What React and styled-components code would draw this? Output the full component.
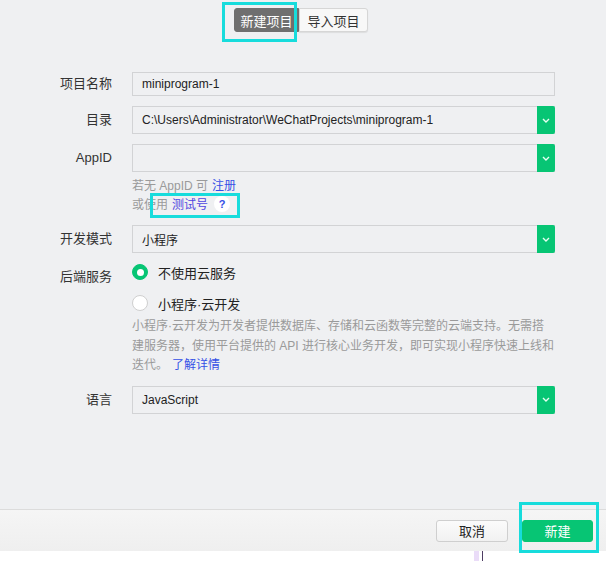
import React from "react";
import styled, { createGlobalStyle } from "styled-components";

const Global = createGlobalStyle`
  html, body { margin: 0; padding: 0; }
  body {
    width: 606px;
    height: 561px;
    overflow: hidden;
    background: #eff0f2;
    font-family: "Liberation Sans", "Noto Sans CJK SC", sans-serif;
    color: #333;
  }
`;

const Page = styled.div`
  position: relative;
  width: 606px;
  height: 561px;
  display: flex;
  flex-direction: column;
`;

const Main = styled.div`
  height: 509px;
  display: flex;
  flex-direction: column;
`;

const Tabs = styled.div`
  display: flex;
  justify-content: center;
  padding: 8px 4px 0 0;
`;

const Tab = styled.div`
  height: 24px;
  box-sizing: border-box;
  display: flex;
  align-items: center;
  justify-content: center;
  font-size: 13px;
  border-radius: ${(p) => (p.$active ? "3px 0 0 3px" : "0 3px 3px 0")};
  width: ${(p) => (p.$active ? "65px" : "69px")};
  background: ${(p) => (p.$active ? "#6f6f6f" : "#f8f8f8")};
  color: ${(p) => (p.$active ? "#fff" : "#333")};
  border: 1px solid ${(p) => (p.$active ? "#6f6f6f" : "#d6d6d6")};
  box-shadow: ${(p) => (p.$active ? "none" : "0 1px 1px rgba(0,0,0,0.08)")};
`;

const Form = styled.div`
  display: flex;
  flex-direction: column;
  padding-top: 40px;
`;

const Row = styled.div`
  display: grid;
  grid-template-columns: 112px 423px;
  column-gap: 20px;
  align-items: ${(p) => (p.$top ? "start" : "center")};
  margin-top: ${(p) => p.$mt || 0}px;
`;

const Label = styled.div`
  text-align: right;
  font-size: 13px;
  color: #333;
  line-height: 16px;
  padding-top: ${(p) => p.$pt || 0}px;
`;

const Field = styled.div`
  height: ${(p) => p.$h}px;
  box-sizing: border-box;
  border: 1px solid #d2d3d5;
  border-right: ${(p) => (p.$select ? "none" : "1px solid #d2d3d5")};
  display: flex;
  align-items: stretch;
  font-size: 12px;
  color: #222;
`;

const FieldText = styled.div`
  flex: 1;
  display: flex;
  align-items: center;
  padding-left: 9px;
  white-space: nowrap;
  overflow: hidden;
`;

const DropBtn = styled.div`
  width: 18px;
  margin: -1px 0;
  background: #07c574;
  border-radius: 0 2px 2px 0;
  display: flex;
  align-items: center;
  justify-content: center;
`;

const Chevron = () => (
  <svg width="8" height="5" viewBox="0 0 8 5">
    <path d="M1 1 L4 4 L7 1" fill="none" stroke="#e8fff2" strokeWidth="1.4" />
  </svg>
);

const Select = ({ value }) => (
  <Field $h={28} $select>
    <FieldText>{value}</FieldText>
    <DropBtn>
      <Chevron />
    </DropBtn>
  </Field>
);

const Hint = styled.div`
  grid-column: 2;
  display: flex;
  flex-direction: column;
  padding-top: 3px;
`;

const HintLine = styled.div`
  height: 19px;
  display: flex;
  align-items: center;
  font-size: 12px;
  color: #9a9a9a;
  white-space: nowrap;
`;

const Link = styled.a`
  color: ${(p) => p.$color || "#3550e6"};
  text-decoration: none;
  margin-left: 4px;
`;

const HelpDot = styled.span`
  display: inline-flex;
  align-items: center;
  justify-content: center;
  width: 16px;
  height: 16px;
  border-radius: 50%;
  background: #fff;
  color: #3550e6;
  font-size: 11px;
  font-weight: bold;
  margin-left: 6px;
`;

const RadioGroup = styled.div`
  display: flex;
  flex-direction: column;
`;

const RadioRow = styled.div`
  display: flex;
  align-items: center;
  height: 20px;
  gap: 10px;
  font-size: 13px;
  color: #222;
  margin-top: ${(p) => p.$mt || 0}px;
`;

const RadioDot = styled.span`
  width: 16px;
  height: 16px;
  box-sizing: border-box;
  border-radius: 50%;
  flex: none;
  background: ${(p) => (p.$on ? "#07c574" : "#fff")};
  border: 1px solid ${(p) => (p.$on ? "#07c574" : "#cfcfcf")};
  display: flex;
  align-items: center;
  justify-content: center;
  &::after {
    content: "";
    display: ${(p) => (p.$on ? "block" : "none")};
    width: 7px;
    height: 7px;
    border-radius: 50%;
    background: #fff;
  }
`;

const Desc = styled.div`
  font-size: 12px;
  line-height: 19.5px;
  color: #9a9a9a;
  margin-top: 4px;
  white-space: nowrap;
`;

const Footer = styled.div`
  height: 42px;
  box-sizing: border-box;
  border-top: 1px solid #dcdcdc;
  background: linear-gradient(#f5f5f5, #efefef);
  display: flex;
  align-items: center;
  justify-content: flex-end;
  gap: 14px;
  padding: 0 13px 0 0;
`;

const Button = styled.div`
  width: ${(p) => (p.$primary ? "71px" : "72px")};
  height: 22px;
  box-sizing: border-box;
  border-radius: 3px;
  display: flex;
  align-items: center;
  justify-content: center;
  font-size: 13px;
  background: ${(p) => (p.$primary ? "#07c574" : "linear-gradient(#fbfbfb, #f1f1f1)")};
  color: ${(p) => (p.$primary ? "#fff" : "#222")};
  border: 1px solid ${(p) => (p.$primary ? "#07c574" : "#cfcfcf")};
`;

const BottomStrip = styled.div`
  flex: 1;
  background: #fff;
  display: flex;
  padding-left: 474px;
  gap: 3px;
`;

const Mark = styled.span`
  width: ${(p) => p.$w}px;
  background: ${(p) => p.$c};
`;

const Highlight = styled.div`
  position: absolute;
  box-sizing: border-box;
  border: 3px solid #17dcdc;
  left: ${(p) => p.$x}px;
  top: ${(p) => p.$y}px;
  width: ${(p) => p.$w}px;
  height: ${(p) => p.$h}px;
  pointer-events: none;
`;

export default function App() {
  return (
    <>
      <Global />
      <Page>
        <Main>
          <Tabs>
            <Tab $active>新建项目</Tab>
            <Tab>导入项目</Tab>
          </Tabs>
          <Form>
            <Row>
              <Label>项目名称</Label>
              <Field $h={24}>
                <FieldText>miniprogram-1</FieldText>
              </Field>
            </Row>
            <Row $mt={10}>
              <Label>目录</Label>
              <Select value="C:\Users\Administrator\WeChatProjects\miniprogram-1" />
            </Row>
            <Row $mt={10}>
              <Label>AppID</Label>
              <Select value="" />
              <Hint>
                <HintLine>
                  若无 AppID 可<Link href="#">注册</Link>
                </HintLine>
                <HintLine>
                  或使用<Link href="#" $color="#4f46e0">测试号</Link>
                  <HelpDot>?</HelpDot>
                </HintLine>
              </Hint>
            </Row>
            <Row $mt={12}>
              <Label>开发模式</Label>
              <Select value="小程序" />
            </Row>
            <Row $mt={9} $top>
              <Label $pt={7}>后端服务</Label>
              <RadioGroup>
                <RadioRow>
                  <RadioDot $on />
                  不使用云服务
                </RadioRow>
                <RadioRow $mt={11}>
                  <RadioDot />
                  小程序·云开发
                </RadioRow>
                <Desc>
                  小程序·云开发为开发者提供数据库、存储和云函数等完整的云端支持。无需搭
                  <br />
                  建服务器，使用平台提供的 API 进行核心业务开发，即可实现小程序快速上线和
                  <br />
                  迭代。<Link href="#">了解详情</Link>
                </Desc>
              </RadioGroup>
            </Row>
            <Row $mt={10}>
              <Label>语言</Label>
              <Select value="JavaScript" />
            </Row>
          </Form>
        </Main>
        <Footer>
          <Button>取消</Button>
          <Button $primary>新建</Button>
        </Footer>
        <BottomStrip>
          <Mark $w={5} $c="#eadcf8" />
          <Mark $w={1} $c="#4e3d63" />
        </BottomStrip>
        <Highlight $x={222} $y={2} $w={75} $h={40} />
        <Highlight $x={150} $y={193} $w={90} $h={25} />
        <Highlight $x={519} $y={502} $w={80} $h={51} />
      </Page>
    </>
  );
}
